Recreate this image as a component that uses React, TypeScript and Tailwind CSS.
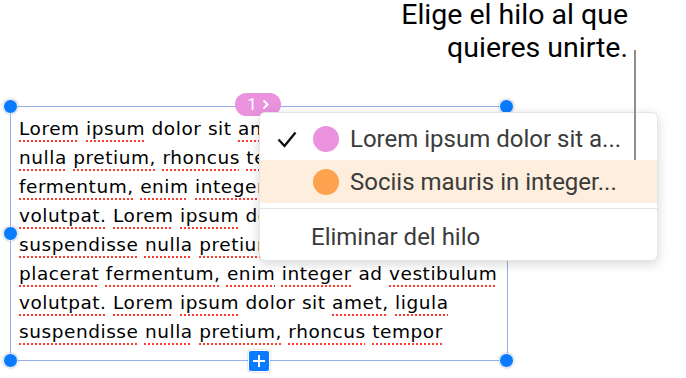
import React from 'react';

type Word = [string, boolean];

const lines: Word[][] = [
  [['Lorem', true], ['ipsum', true], ['dolor', false], ['sit', false], ['amet,', true], ['ligula', true], ['suspendisse', true]],
  [['nulla', true], ['pretium,', true], ['rhoncus', true], ['tempor', true], ['placerat', true]],
  [['fermentum,', true], ['enim', true], ['integer', true], ['ad', false], ['vestibulum', true]],
  [['volutpat.', true], ['Lorem', true], ['ipsum', true], ['dolor', false], ['sit', false], ['amet,', true], ['ligula', true]],
  [['suspendisse', true], ['nulla', true], ['pretium,', true], ['rhoncus', true], ['tempor', true]],
  [['placerat', true], ['fermentum,', true], ['enim', true], ['integer', true], ['ad', false], ['vestibulum', true]],
  [['volutpat.', true], ['Lorem', true], ['ipsum', true], ['dolor', false], ['sit', false], ['amet,', true], ['ligula', true]],
  [['suspendisse', true], ['nulla', true], ['pretium,', true], ['rhoncus', true], ['tempor', true]],
];

const Handle: React.FC<{ className: string }> = ({ className }) => (
  <div className={`absolute w-[15px] h-[15px] rounded-full bg-[#0a7bff] border-[1.5px] border-white shadow-[0_0_2px_rgba(0,0,0,0.35)] ${className}`} />
);

const App: React.FC = () => {
  return (
    <div className="relative w-[686px] h-[378px] bg-white overflow-hidden">
      {/* text box */}
      <div className="ml-[10px] mt-[106px] w-[498px] h-[255px] border border-[#97b0ea] pl-[8px] pt-[7px] overflow-hidden font-['DejaVu_Sans',sans-serif]">
        {lines.map((line, i) => (
          <div key={i} className="whitespace-nowrap text-[18.5px] leading-[29px] tracking-[0.55px] text-black">
            {line.map(([w, u], j) => (
              <React.Fragment key={j}>
                {j > 0 && ' '}
                <span className={u ? 'underline decoration-dotted decoration-[#ff3b30] decoration-2 underline-offset-[5px]' : ''}>{w}</span>
              </React.Fragment>
            ))}
          </div>
        ))}
      </div>

      {/* handles */}
      <Handle className="left-[3px] top-[99px]" />
      <Handle className="left-[499px] top-[99px]" />
      <Handle className="left-[3px] top-[226px]" />
      <Handle className="left-[3px] top-[353px]" />
      <Handle className="left-[499px] top-[353px]" />

      {/* add button */}
      <div className="absolute left-[248px] top-[350px] w-[22px] h-[22px] rounded-[3px] bg-[#0a7bff] border border-white shadow-[0_0_2px_rgba(0,0,0,0.3)] flex items-center justify-center">
        <svg width="14" height="14" viewBox="0 0 14 14">
          <path d="M7 1v12M1 7h12" stroke="white" strokeWidth="2" />
        </svg>
      </div>

      {/* thread badge */}
      <div className="absolute left-[235px] top-[93px] w-[46px] h-[23px] rounded-full bg-[#ea92de] flex items-center justify-center gap-[5px] text-white text-[17px] leading-none font-['Roboto',sans-serif]">
        <span>1</span>
        <svg width="7" height="11" viewBox="0 0 7 11">
          <path d="M1.5 1.5l4 4-4 4" stroke="white" strokeWidth="2" fill="none" />
        </svg>
      </div>

      {/* thread menu */}
      <div className="absolute left-[259px] top-[112px] w-[399px] h-[149px] bg-white rounded-[6px] border border-black/10 shadow-[0_3px_12px_rgba(0,0,0,0.16)] pt-[5px] font-['Roboto',sans-serif] text-[24px] text-[#3b3b3b]">
        <div className="flex items-center h-[42px]">
          <svg className="ml-[17px]" width="20" height="17" viewBox="0 0 20 17">
            <path d="M1.5 8.5l6 6.5L18.5 1.5" stroke="#111" strokeWidth="2.4" fill="none" />
          </svg>
          <div className="ml-[16px] w-[26px] h-[26px] rounded-full bg-[#ea92de]" />
          <span className="ml-[11px]">Lorem ipsum dolor sit a...</span>
        </div>
        <div className="flex items-center h-[43px] bg-[#fdeedd]">
          <div className="ml-[53px] w-[26px] h-[26px] rounded-full bg-[#fda24e]" />
          <span className="ml-[11px]">Sociis mauris in integer...</span>
        </div>
        <div className="mt-[5px] h-px bg-[#e2e2e2]" />
        <div className="flex items-center h-[42px] mt-[7px]">
          <span className="ml-[51px]">Eliminar del hilo</span>
        </div>
      </div>

      {/* callout */}
      <div className="absolute right-[58px] top-0 text-right text-[28.5px] text-black font-['Roboto',sans-serif]">
        <p className="leading-[29px]">Elige el hilo al que</p>
        <p className="leading-[37px]">quieres unirte.</p>
      </div>
      <div className="absolute left-[634px] top-[50px] w-[2px] h-[110px] bg-[#8e8e8e]" />
    </div>
  );
};

export default App;
